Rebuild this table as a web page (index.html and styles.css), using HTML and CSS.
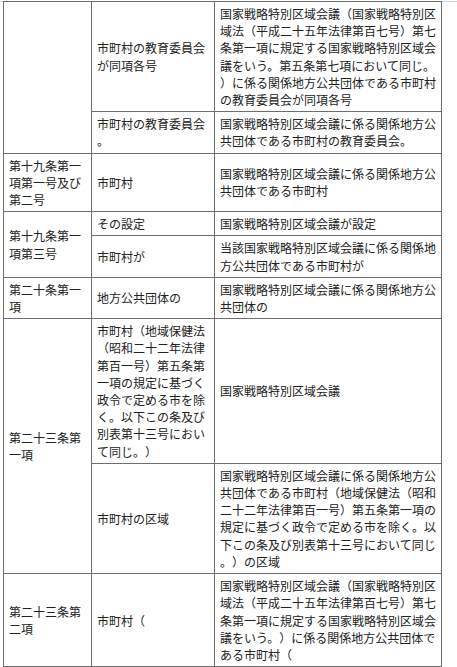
FILE: index.html
```html
<!DOCTYPE html>
<html lang="ja">
<head>
<meta charset="utf-8">
<title>読替表</title>
<link rel="stylesheet" href="styles.css">
</head>
<body>
<div class="page">
<table class="law-table">
<colgroup>
<col class="c1">
<col class="c2">
<col class="c3">
</colgroup>
<tbody>
<tr>
<td rowspan="2"></td>
<td>市町村の教育委員会が同項各号</td>
<td>国家戦略特別区域会議（国家戦略特別区域法（平成二十五年法律第百七号）第七条第一項に規定する国家戦略特別区域会議をいう。第五条第七項において同じ。）に係る関係地方公共団体である市町村の教育委員会が同項各号</td>
</tr>
<tr>
<td>市町村の教育委員会。</td>
<td>国家戦略特別区域会議に係る関係地方公共団体である市町村の教育委員会。</td>
</tr>
<tr>
<td>第十九条第一項第一号及び第二号</td>
<td>市町村</td>
<td>国家戦略特別区域会議に係る関係地方公共団体である市町村</td>
</tr>
<tr>
<td rowspan="2">第十九条第一項第三号</td>
<td>その設定</td>
<td>国家戦略特別区域会議が設定</td>
</tr>
<tr>
<td>市町村が</td>
<td>当該国家戦略特別区域会議に係る関係地方公共団体である市町村が</td>
</tr>
<tr>
<td>第二十条第一項</td>
<td>地方公共団体の</td>
<td>国家戦略特別区域会議に係る関係地方公共団体の</td>
</tr>
<tr>
<td rowspan="2">第二十三条第一項</td>
<td>市町村（地域保健法（昭和二十二年法律第百一号）第五条第一項の規定に基づく政令で定める市を除く。以下この条及び別表第十三号において同じ。）</td>
<td>国家戦略特別区域会議</td>
</tr>
<tr>
<td>市町村の区域</td>
<td>国家戦略特別区域会議に係る関係地方公共団体である市町村（地域保健法（昭和二十二年法律第百一号）第五条第一項の規定に基づく政令で定める市を除く。以下この条及び別表第十三号において同じ。）の区域</td>
</tr>
<tr>
<td>第二十三条第二項</td>
<td>市町村（</td>
<td>国家戦略特別区域会議（国家戦略特別区域法（平成二十五年法律第百七号）第七条第一項に規定する国家戦略特別区域会議をいう。）に係る関係地方公共団体である市町村（</td>
</tr>
</tbody>
</table>
</div>
</body>
</html>
```

FILE: styles.css
```css
html, body {
  margin: 0;
  padding: 0;
  background: #ffffff;
}

body {
  font-family: "Noto Sans CJK JP", "Noto Sans", sans-serif;
  font-size: 12px;
  line-height: 17.2px;
  color: #222222;
  text-spacing-trim: space-all;
  font-feature-settings: "fwid" 1;
}

.page {
  margin-top: 1px;
  border-top: 1px solid #d4d4d4;
  padding-left: 3px;
}

.law-table {
  margin-top: -1px;
  width: 439px;
  table-layout: fixed;
  border-collapse: separate;
  border-spacing: 0;
  border-left: 1px solid #6e6e6e;
  border-top: 1px solid #6e6e6e;
  background: #ffffff;
}

.c1 { width: 88px; }
.c2 { width: 123px; }
.c3 { width: 227px; }

.law-table td {
  box-sizing: border-box;
  padding: 3px 5px;
  border-right: 1px solid #6e6e6e;
  border-bottom: 1px solid #6e6e6e;
  vertical-align: middle;
  text-align: left;
  line-break: anywhere;
  word-break: break-all;
  text-spacing-trim: space-all;
}
```
